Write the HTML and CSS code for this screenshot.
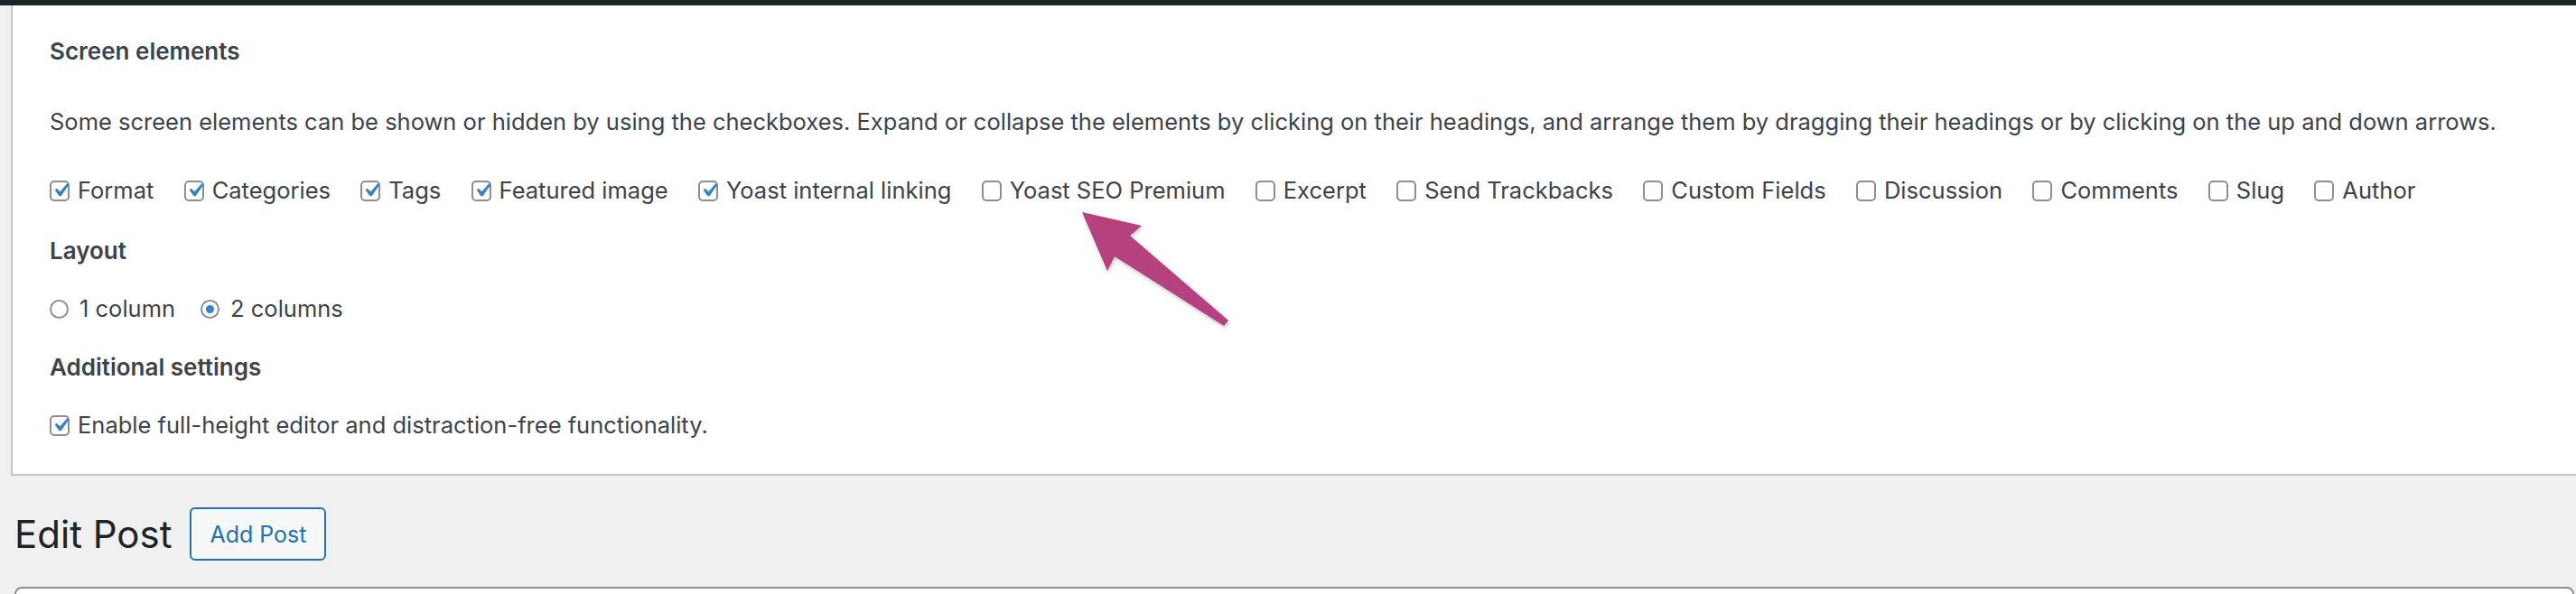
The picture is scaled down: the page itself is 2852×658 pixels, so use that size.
FILE: index.html
```html
<!DOCTYPE html>
<html lang="en">
<head>
<meta charset="utf-8">
<title>Edit Post</title>
<link rel="stylesheet" href="styles.css">
</head>
<body>
<div class="topbar"></div>
<div class="screen-wrap">
  <div class="panel">
    <h5 class="legend legend-first">Screen elements</h5>
    <p class="desc">Some screen elements can be shown or hidden by using the checkboxes. Expand or collapse the elements by clicking on their headings, and arrange them by dragging their headings or by clicking on the up and down arrows.</p>
    <div class="prefs">
      <label class="opt"><span class="cb on"><svg viewBox="0 0 20 20"><path d="M14.83 4.89l1.34.94-5.81 8.38H9.02L5.78 9.67l1.34-1.25 2.57 2.4z"/></svg></span>Format</label>
      <label class="opt"><span class="cb on"><svg viewBox="0 0 20 20"><path d="M14.83 4.89l1.34.94-5.81 8.38H9.02L5.78 9.67l1.34-1.25 2.57 2.4z"/></svg></span>Categories</label>
      <label class="opt"><span class="cb on"><svg viewBox="0 0 20 20"><path d="M14.83 4.89l1.34.94-5.81 8.38H9.02L5.78 9.67l1.34-1.25 2.57 2.4z"/></svg></span>Tags</label>
      <label class="opt"><span class="cb on"><svg viewBox="0 0 20 20"><path d="M14.83 4.89l1.34.94-5.81 8.38H9.02L5.78 9.67l1.34-1.25 2.57 2.4z"/></svg></span>Featured image</label>
      <label class="opt"><span class="cb on"><svg viewBox="0 0 20 20"><path d="M14.83 4.89l1.34.94-5.81 8.38H9.02L5.78 9.67l1.34-1.25 2.57 2.4z"/></svg></span>Yoast internal linking</label>
      <label class="opt"><span class="cb"></span>Yoast SEO Premium</label>
      <label class="opt"><span class="cb"></span>Excerpt</label>
      <label class="opt"><span class="cb"></span>Send Trackbacks</label>
      <label class="opt"><span class="cb"></span>Custom Fields</label>
      <label class="opt"><span class="cb"></span>Discussion</label>
      <label class="opt"><span class="cb"></span>Comments</label>
      <label class="opt"><span class="cb"></span>Slug</label>
      <label class="opt"><span class="cb"></span>Author</label>
    </div>
    <h5 class="legend legend-layout">Layout</h5>
    <div class="prefs prefs-radio">
      <label class="opt"><span class="rd"></span>1 column</label>
      <label class="opt"><span class="rd on"></span>2 columns</label>
    </div>
    <h5 class="legend legend-add">Additional settings</h5>
    <div class="prefs prefs-last">
      <label class="opt"><span class="cb on"><svg viewBox="0 0 20 20"><path d="M14.83 4.89l1.34.94-5.81 8.38H9.02L5.78 9.67l1.34-1.25 2.57 2.4z"/></svg></span>Enable full-height editor and distraction-free functionality.</label>
    </div>
  </div>
</div>
<div class="content">
  <div class="title-row">
    <h1 class="page-title">Edit Post</h1>
    <a class="add-btn">Add Post</a>
  </div>
  <div class="title-box"></div>
</div>
<svg class="arrow" width="200" height="150" viewBox="1180 220 200 150">
  <polygon points="1198,235 1264,250 1251,261 1360,355 1355,361 1234,284 1226,300"/>
</svg>
</body>
</html>
```

FILE: styles.css
```css
html, body {
  margin: 0;
  padding: 0;
}
body {
  background: #f0f0f1;
  font-family: Inter, "Liberation Sans", sans-serif;
  color: #3c434a;
  width: 2852px;
  height: 658px;
  overflow: hidden;
  position: relative;
}
.topbar {
  height: 6px;
  background: #1d2327;
}
.screen-wrap {
  padding-left: 12px;
}
.panel {
  background: #fff;
  border-left: 2px solid #c3c4c7;
  border-bottom: 2px solid #c3c4c7;
  padding: 33px 0 36px 41px;
}
.legend {
  margin: 0;
  font-size: 26px;
  font-weight: 600;
  line-height: 36px;
  color: #3c434a;
}
.desc {
  margin: 42px 0 0;
  font-size: 25.5px;
  line-height: 36px;
  white-space: nowrap;
}
.prefs {
  display: flex;
  align-items: center;
  margin-top: 40px;
  height: 36px;
}
.legend-layout { margin-top: 31px; }
.prefs-radio { margin-top: 28px; }
.legend-add { margin-top: 29px; }
.prefs-last { margin-top: 28px; }
.opt {
  display: inline-flex;
  align-items: center;
  font-size: 25.5px;
  line-height: 36px;
  margin-right: 33.3px;
  white-space: nowrap;
}
.cb {
  box-sizing: border-box;
  width: 22px;
  height: 23px;
  border: 2px solid #8c8f94;
  border-radius: 5px;
  margin-right: 9px;
  background: #fff;
  display: inline-flex;
  align-items: center;
  justify-content: center;
  flex: none;
  overflow: visible;
}
.cb svg {
  width: 30px;
  height: 30px;
  margin: 0 -6px 0 -4px;
  fill: #3582c4;
  flex: none;
}
.rd {
  box-sizing: border-box;
  width: 21px;
  height: 21px;
  border: 2px solid #8c8f94;
  border-radius: 50%;
  margin-right: 12px;
  background: #fff;
  display: inline-flex;
  align-items: center;
  justify-content: center;
  flex: none;
}
.rd.on::after {
  content: "";
  width: 9px;
  height: 9px;
  border-radius: 50%;
  background: #3582c4;
}
.prefs-radio .opt { margin-right: 28px; }
.content {
  padding: 0 2px 0 16px;
}
.title-row {
  display: flex;
  align-items: center;
  margin-top: 35px;
  height: 59px;
}
.page-title {
  margin: 0 20px 0 0;
  font-size: 42px;
  font-weight: 400;
  line-height: 59px;
  color: #1d2327;
}
.add-btn {
  box-sizing: border-box;
  height: 59px;
  padding: 0 20px;
  display: inline-flex;
  align-items: center;
  border: 2px solid #2271b1;
  border-radius: 6px;
  background: #f6f7f7;
  color: #2271b1;
  font-size: 25px;
}
.title-box {
  margin-top: 29px;
  height: 40px;
  border: 2px solid #8c8f94;
  border-radius: 8px;
  background: #fff;
}
.arrow {
  position: absolute;
  left: 1180px;
  top: 220px;
  fill: #b5427e;
  filter: drop-shadow(1px 2px 2px rgba(0,0,0,0.25));
}
```
